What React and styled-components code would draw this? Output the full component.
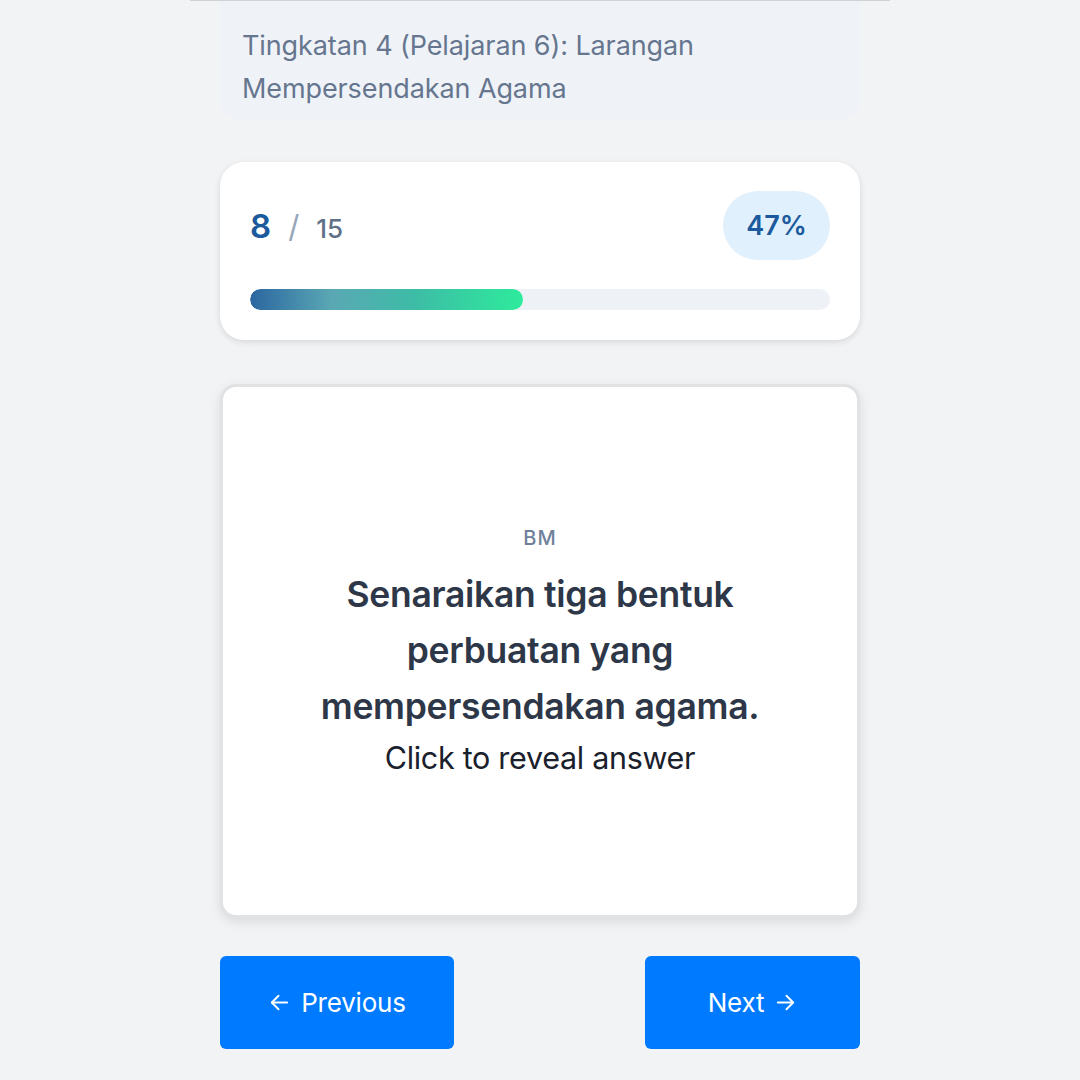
import React from 'react';
import styled, { createGlobalStyle } from 'styled-components';

const GlobalStyle = createGlobalStyle`
  html, body {
    margin: 0;
    padding: 0;
    background: #f2f3f5;
    font-family: 'Inter', 'Noto Sans', sans-serif;
  }
`;

const Page = styled.div`
  width: 700px;
  height: 1080px;
  margin: 0 auto;
  box-sizing: border-box;
  border-top: 1px solid #cfd2d6;
  padding: 0 30px;
  display: flex;
  flex-direction: column;
  overflow: hidden;
`;

const TitleBox = styled.div`
  background: #eff3f8;
  border-radius: 0 0 18px 18px;
  padding: 23px 22px 9px;
  color: #66768f;
  font-size: 27px;
  line-height: 43px;
  letter-spacing: -0.1px;
`;

const ProgressCard = styled.div`
  margin-top: 43px;
  background: #fff;
  border-radius: 24px;
  padding: 29px 30px 30px;
  box-shadow: 0 2px 6px rgba(0, 0, 0, 0.12);
  display: flex;
  flex-direction: column;
  gap: 29px;
`;

const CountRow = styled.div`
  display: flex;
  align-items: center;
  justify-content: space-between;
  height: 69px;
`;

const Count = styled.div`
  display: flex;
  align-items: baseline;
  gap: 17px;
  font-weight: 600;
`;

const Current = styled.span`
  color: #1b5a9c;
  font-size: 33px;
`;

const Slash = styled.span`
  color: #97a6ba;
  font-size: 31px;
  font-weight: 400;
`;

const Total = styled.span`
  color: #5f7088;
  font-size: 26px;
  font-weight: 500;
`;

const Badge = styled.div`
  width: 107px;
  height: 69px;
  border-radius: 35px;
  background: #e1f0fd;
  color: #1b5a9c;
  font-size: 27px;
  font-weight: 600;
  display: flex;
  align-items: center;
  justify-content: center;
`;

const Track = styled.div`
  height: 21px;
  border-radius: 11px;
  background: #eef1f6;
  overflow: hidden;
`;

const Fill = styled.div`
  height: 100%;
  border-radius: 11px;
  background: linear-gradient(90deg, #2b66a0 0%, #5aa8b4 30%, #3dbca6 60%, #2eeb9c 100%);
`;

const FlashCard = styled.div`
  margin-top: 44px;
  height: 534px;
  box-sizing: border-box;
  background: #fff;
  border: 3px solid #e1e2e4;
  border-radius: 16px;
  box-shadow: 0 4px 12px rgba(0, 0, 0, 0.1);
  display: flex;
  flex-direction: column;
  align-items: center;
  justify-content: center;
  text-align: center;
  padding: 5px 30px 0;
`;

const Subject = styled.div`
  color: #6f809a;
  font-size: 20px;
  font-weight: 500;
  line-height: 24px;
  letter-spacing: 1px;
  margin-bottom: 17px;
`;

const Question = styled.div`
  color: #2d3748;
  font-size: 35.5px;
  font-weight: 600;
  line-height: 56px;
  letter-spacing: -0.3px;
  max-width: 500px;
`;

const Hint = styled.div`
  color: #1a202c;
  font-size: 30.5px;
  line-height: 46px;
  letter-spacing: -0.3px;
`;

const NavRow = styled.div`
  margin-top: 38px;
  display: flex;
  justify-content: space-between;
`;

const NavButton = styled.button`
  width: ${p => p.$w}px;
  height: 93px;
  border: none;
  border-radius: 6px;
  background: #007bff;
  color: #fff;
  font-family: inherit;
  font-size: 26px;
  letter-spacing: -0.2px;
  display: flex;
  align-items: center;
  justify-content: center;
  gap: 10px;
  cursor: pointer;
`;

const ArrowIcon = ({ left }) => (
  <svg width="23" height="23" viewBox="0 0 24 24" fill="none" stroke="#fff" strokeWidth="2" strokeLinecap="round" strokeLinejoin="round">
    {left ? (
      <>
        <path d="M20 12H4" />
        <path d="M11 5l-7 7 7 7" />
      </>
    ) : (
      <>
        <path d="M4 12h16" />
        <path d="M13 5l7 7-7 7" />
      </>
    )}
  </svg>
);

const App = () => {
  const current = 8;
  const total = 15;
  const pct = Math.round(((current - 1) / total) * 100);
  return (
    <>
      <GlobalStyle />
      <Page>
        <TitleBox>Tingkatan 4 (Pelajaran 6): Larangan Mempersendakan Agama</TitleBox>
        <ProgressCard>
          <CountRow>
            <Count>
              <Current>{current}</Current>
              <Slash>/</Slash>
              <Total>{total}</Total>
            </Count>
            <Badge>{pct}%</Badge>
          </CountRow>
          <Track>
            <Fill style={{ width: `${pct}%` }} />
          </Track>
        </ProgressCard>
        <FlashCard>
          <Subject>BM</Subject>
          <Question>Senaraikan tiga bentuk perbuatan yang mempersendakan agama.</Question>
          <Hint>Click to reveal answer</Hint>
        </FlashCard>
        <NavRow>
          <NavButton $w={234}>
            <ArrowIcon left /> Previous
          </NavButton>
          <NavButton $w={215}>
            Next <ArrowIcon />
          </NavButton>
        </NavRow>
      </Page>
    </>
  );
};

export default App;
